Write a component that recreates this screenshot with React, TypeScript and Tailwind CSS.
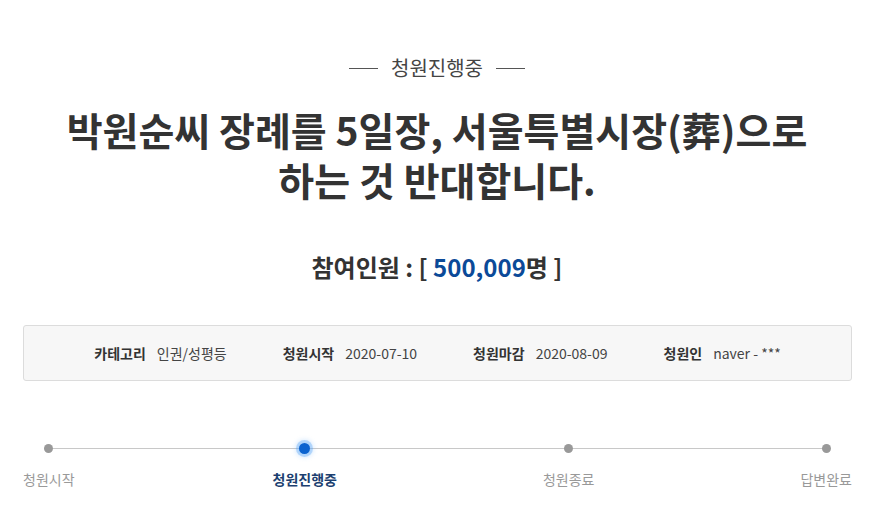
const font = { fontFamily: '"Noto Sans CJK KR", "Noto Sans", sans-serif' };

const info = [
  { label: '카테고리', value: '인권/성평등' },
  { label: '청원시작', value: '2020-07-10' },
  { label: '청원마감', value: '2020-08-09' },
  { label: '청원인', value: 'naver - ***' },
];

const steps = [
  { name: '청원시작', active: false },
  { name: '청원진행중', active: true },
  { name: '청원종료', active: false },
  { name: '답변완료', active: false },
];

export default function App() {
  return (
    <div className="min-h-screen w-[874px] bg-white pt-[54px] text-[#333]" style={font}>
      {/* status label */}
      <div className="flex items-center justify-center gap-[13px]">
        <span className="h-px w-[29px] bg-[#555]" />
        <span className="text-[20px] leading-[28px] text-[#444]">청원진행중</span>
        <span className="h-px w-[29px] bg-[#555]" />
      </div>

      <h1 className="mt-[22px] text-center text-[39px] font-bold leading-[50px] text-[#333]">
        박원순씨 장례를 5일장, 서울특별시장(葬)으로
        <br />
        하는 것 반대합니다.
      </h1>

      <p className="mt-[46px] text-center text-[24px] font-bold leading-[34px] text-[#333]">
        참여인원 : [ <span className="text-[#0b4a98]">500,009</span>명 ]
      </p>

      <div className="mx-[23px] mt-[41px] flex h-[56px] w-[829px] items-center justify-center gap-14 rounded-[3px] border border-[#dcdcdc] bg-[#f7f7f7]">
        {info.map((item) => (
          <div key={item.label} className="flex items-center gap-[11px] text-[14px] leading-5">
            <span className="font-bold text-[#333]">{item.label}</span>
            <span className="text-[#444]">{item.value}</span>
          </div>
        ))}
      </div>

      {/* progress */}
      <div className="relative mx-[23px] mt-[58px] w-[829px]">
        <div className="absolute left-[27px] right-[27px] top-[9px] h-px bg-[#c8c8c8]" />
        <div className="flex justify-between">
          {steps.map((s) => (
            <div key={s.name} className={s.active ? 'relative -ml-2 flex flex-col items-center' : 'relative flex flex-col items-center'}>
              <div className="flex h-[18px] items-center justify-center">
                {s.active ? (
                  <span className="h-[11px] w-[11px] rounded-full bg-[#0a62cf] shadow-[0_0_0_3px_rgba(80,160,245,0.35),0_0_4px_4px_rgba(120,185,250,0.25)]" />
                ) : (
                  <span className="h-[9px] w-[9px] rounded-full bg-[#999]" />
                )}
              </div>
              <span
                className={
                  s.active
                    ? 'mt-3 text-[14px] font-bold leading-5 text-[#1c3f70]'
                    : 'mt-3 text-[14px] leading-5 text-[#999]'
                }
              >
                {s.name}
              </span>
            </div>
          ))}
        </div>
      </div>
    </div>
  );
}
